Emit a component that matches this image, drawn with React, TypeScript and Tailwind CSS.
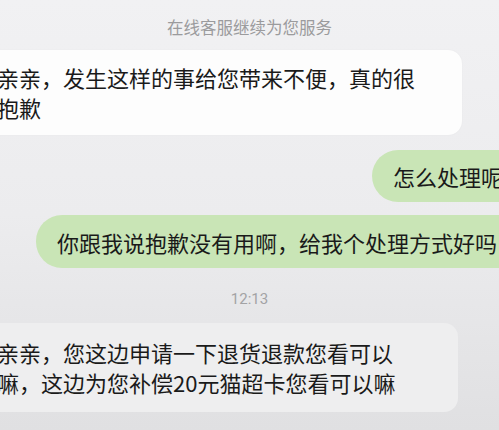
export default function App() {
  const font = "font-['Noto_Sans_CJK_SC','Noto_Sans',sans-serif]";

  return (
    <div className={"w-[499px] h-[430px] overflow-hidden bg-gradient-to-b from-[#f1f1f3] via-[#ececee] to-[#e0e0e2] text-[#1a1a1a] " + font}>
      <div className="pt-[15px] text-center text-[16.5px] leading-[24px] text-[#9b9b9d]">在线客服继续为您服务</div>

      {/* agent message */}
      <div className="mt-[11px] -ml-[20px] w-[482px] rounded-[14px] bg-[#fdfdfd] pl-[17px] py-[12px] pb-[13px] text-[22px] leading-[30px] shadow-[0_0_2px_rgba(0,0,0,0.04)]">
        <div className="whitespace-nowrap">亲亲，发生这样的事给您带来不便，真的很</div>
        <div className="whitespace-nowrap">抱歉</div>
      </div>

      {/* my messages */}
      <div className="mt-[15px] flex justify-end">
        <div className="ml-[372px] -mr-[30px] flex h-[52px] flex-1 items-center rounded-[26px] bg-[#c9e5b6] pl-[21px] text-[22px] leading-[30px] whitespace-nowrap">
          怎么处理呢
        </div>
      </div>
      <div className="mt-[13px] flex">
        <div className="ml-[36px] -mr-[30px] flex h-[53px] flex-1 items-center rounded-[26px] bg-[#c9e5b6] pl-[21px] text-[22px] leading-[30px] whitespace-nowrap">
          你跟我说抱歉没有用啊，给我个处理方式好吗
        </div>
      </div>

      <div className="mt-[21px] text-center text-[15px] leading-[20px] text-[#a3a3a5] font-['Roboto',sans-serif]">12:13</div>

      {/* agent reply */}
      <div className="mt-[14px] -ml-[20px] w-[478px] rounded-[14px] bg-[#eeeeef] pl-[17px] pt-[14px] pb-[15px] text-[22px] leading-[30px]">
        <div className="whitespace-nowrap">亲亲，您这边申请一下退货退款您看可以</div>
        <div className="whitespace-nowrap">嘛，这边为您补偿20元猫超卡您看可以嘛</div>
      </div>
    </div>
  );
}
